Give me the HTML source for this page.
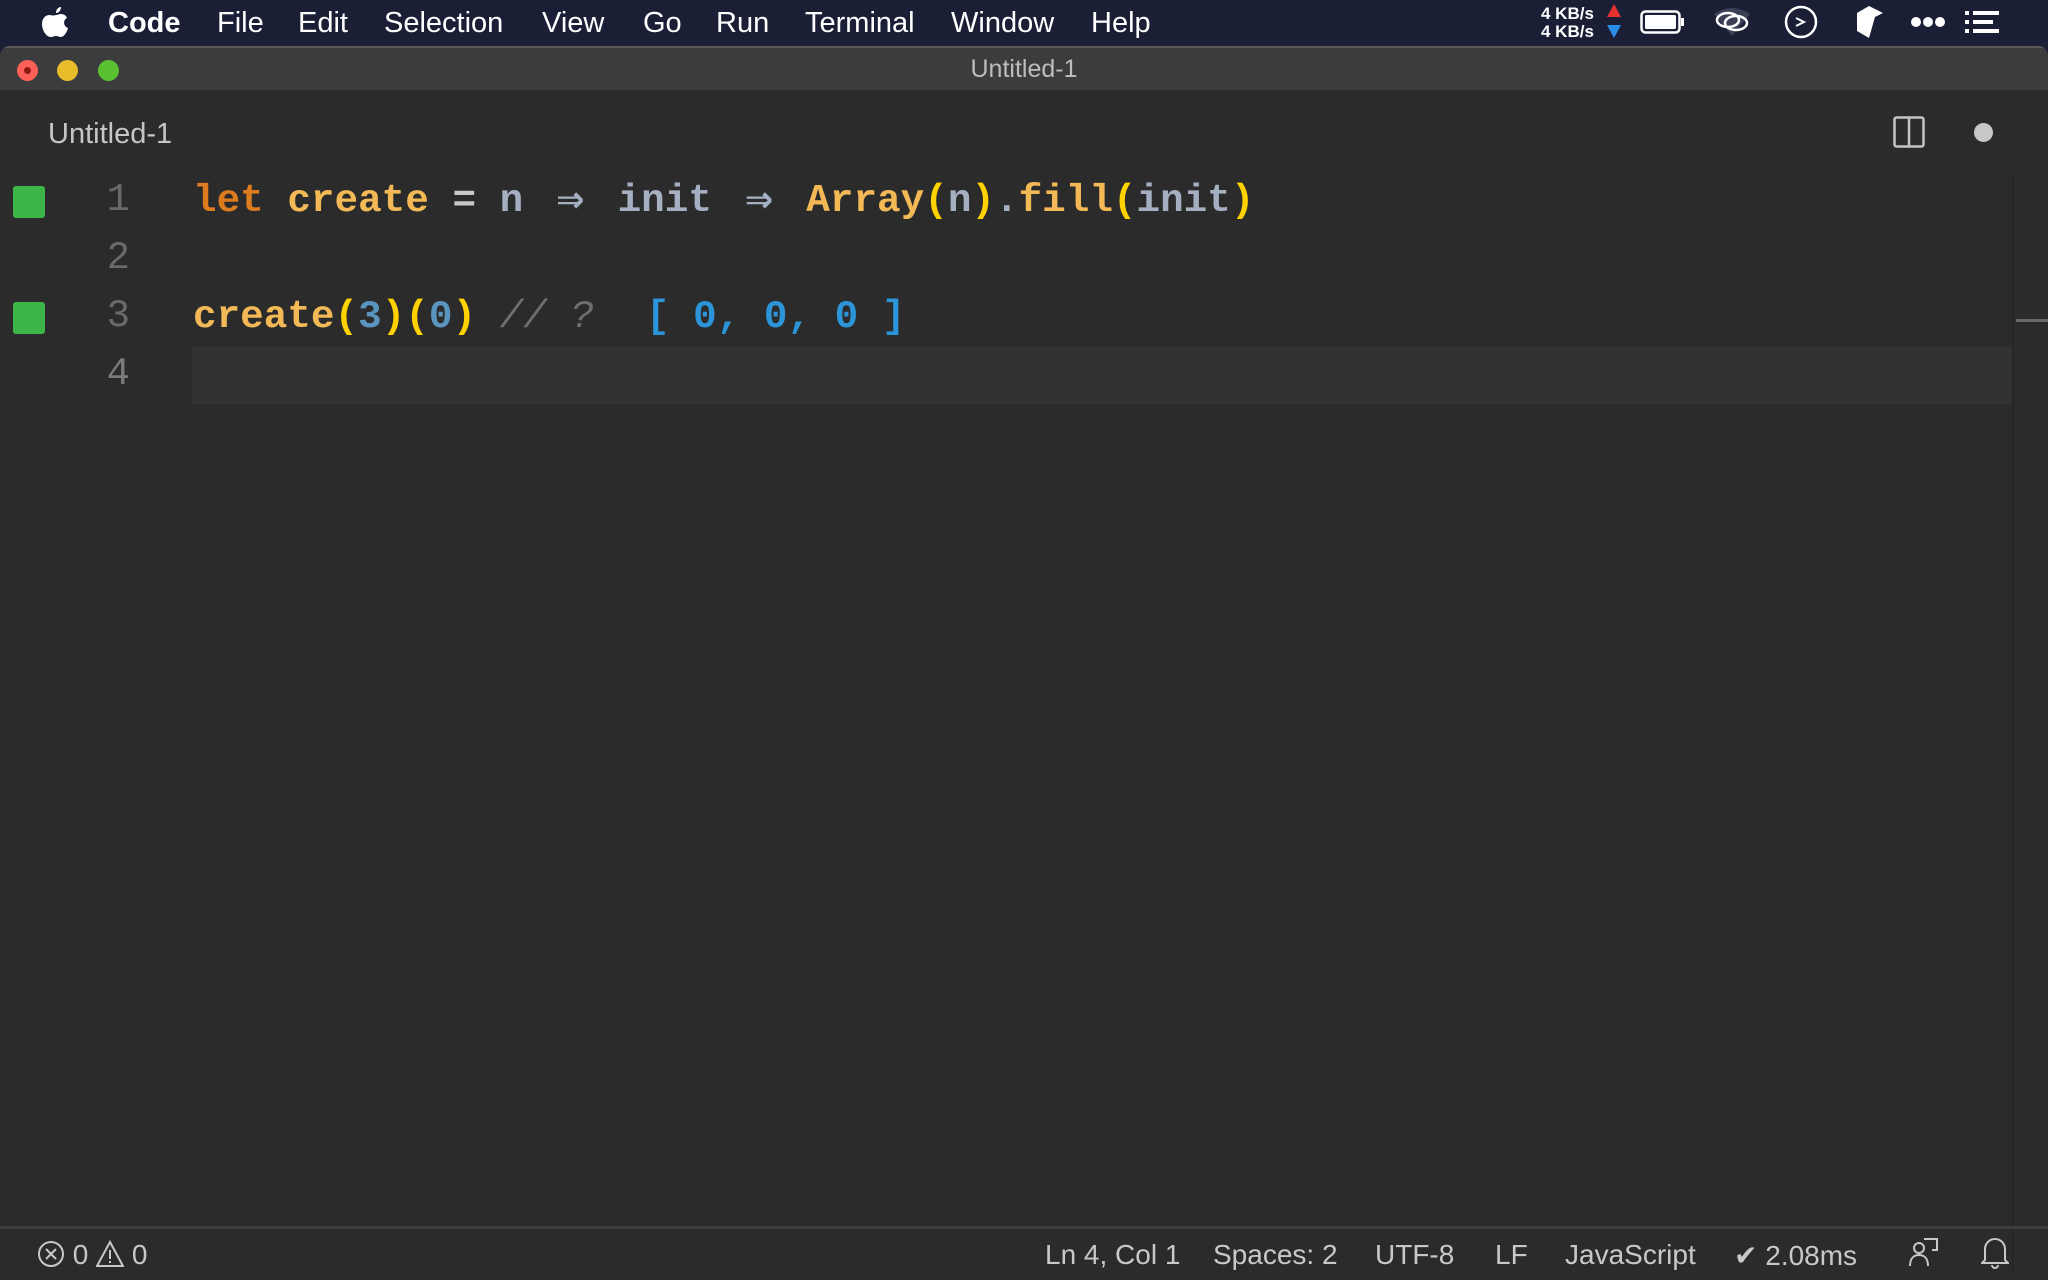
<!DOCTYPE html>
<html><head><meta charset="utf-8"><style>
*{margin:0;padding:0;box-sizing:border-box}
body{width:2048px;height:1280px;background:#1b2036;overflow:hidden;font-family:"Liberation Sans",sans-serif;position:relative}
.menubar{position:absolute;left:0;top:0;width:2048px;height:45px;background:#1a1f36;color:#fff;font-size:29px}
.menubar span{position:absolute;top:7px}
.win{position:absolute;left:0;top:46px;width:2048px;height:1234px;background:#2b2b2b;border-radius:10px 10px 0 0;overflow:hidden}
.title{position:absolute;left:0;top:0;width:2048px;height:44px;background:#3c3c3c;border-top:2px solid #5a5a5a}
.tl{position:absolute;top:12px;width:21px;height:21px;border-radius:50%}
.code{position:absolute;font-family:"Liberation Mono","DejaVu Sans Mono",monospace;font-size:39.3px;white-space:pre;line-height:57px}
.ln{position:absolute;left:100px;width:30px;text-align:right;font-family:"Liberation Mono",monospace;font-size:39px;color:#6a6a6a;line-height:57px}
.arr{display:inline-block;width:47.2px;text-align:center;font-family:"DejaVu Sans Mono",monospace;font-size:46px;line-height:40px;vertical-align:-2px;overflow:visible;white-space:nowrap}
.sb{position:absolute;top:1239px;font-size:28px;color:#c8c8c8}
</style></head><body>
<div class="menubar">
<svg style="position:absolute;left:42px;top:7px" width="28" height="32" viewBox="0 0 28 32"><path d="M19 0c0 3-2 6-5 6 0-3 2-6 5-6zM14 8c2 0 3-1 5-1 2 0 5 1 6 4-4 2-4 8 1 10-1 4-4 9-7 9-2 0-3-1-5-1s-3 1-5 1C4 30 0 23 0 17 0 11 4 8 7 8c2 0 4 1 7 0z" fill="#fff"/></svg>
<span style="left:108px;font-weight:bold">Code</span>
<span style="left:217px">File</span>
<span style="left:298px">Edit</span>
<span style="left:384px">Selection</span>
<span style="left:542px">View</span>
<span style="left:643px">Go</span>
<span style="left:716px">Run</span>
<span style="left:805px">Terminal</span>
<span style="left:951px">Window</span>
<span style="left:1091px">Help</span>
<div style="position:absolute;left:1541px;top:5px;font-size:17px;line-height:18px;font-weight:bold">4 KB/s<br>4 KB/s</div>
<svg style="position:absolute;left:1606px;top:4px" width="16" height="36"><path d="M8 0L15 13H1z" fill="#e8322e"/><path d="M1 21H15L8 34z" fill="#2a8de8"/></svg>
<svg style="position:absolute;left:1640px;top:10px" width="46" height="25"><rect x="1.5" y="1.5" width="38" height="21" rx="4" fill="none" stroke="#fff" stroke-width="2.5"/><rect x="5" y="5" width="31" height="14" rx="1.5" fill="#fff"/><rect x="41" y="8" width="3" height="8" fill="#fff"/></svg>
<svg style="position:absolute;left:1712px;top:6px" width="40" height="32"><path d="M2 8Q20-4 38 8L20 30z" fill="#3a3f55"/><ellipse cx="16" cy="14" rx="11" ry="7" fill="none" stroke="#fff" stroke-width="2.5"/><ellipse cx="24" cy="17" rx="11" ry="7" fill="none" stroke="#fff" stroke-width="2.5"/></svg>
<svg style="position:absolute;left:1783px;top:4px" width="36" height="36"><circle cx="18" cy="18" r="15" fill="none" stroke="#fff" stroke-width="2.5"/><path d="M13 14l8 4-8 4" fill="none" stroke="#fff" stroke-width="2"/></svg>
<svg style="position:absolute;left:1855px;top:5px" width="30" height="34"><path d="M2 8L14 1 28 8 20 12 16 26 14 33 2 26z" fill="#fff"/></svg>
<svg style="position:absolute;left:1910px;top:16px" width="36" height="12"><circle cx="6" cy="6" r="5" fill="#fff"/><circle cx="18" cy="6" r="5" fill="#fff"/><circle cx="30" cy="6" r="5" fill="#fff"/></svg>
<svg style="position:absolute;left:1965px;top:11px" width="36" height="22"><rect x="0" y="0" width="4" height="4" fill="#fff"/><rect x="8" y="0" width="26" height="4" fill="#fff"/><rect x="0" y="9" width="4" height="4" fill="#fff"/><rect x="8" y="9" width="20" height="4" fill="#fff"/><rect x="0" y="18" width="4" height="4" fill="#fff"/><rect x="8" y="18" width="26" height="4" fill="#fff"/></svg>
</div>
<div class="win">
<div class="title">
<div class="tl" style="left:17px;background:#fe5f57"><div style="width:7px;height:7px;border-radius:50%;background:#8a1a12;margin:7px"></div></div>
<div class="tl" style="left:57px;background:#e8bd2b"></div>
<div class="tl" style="left:98px;background:#5ac231"></div>
<div style="position:absolute;left:0;width:2048px;top:7px;text-align:center;color:#bdbdbd;font-size:25px">Untitled-1</div>
</div>
<div style="position:absolute;left:48px;top:72px;color:#c6c6c6;font-size:29px">Untitled-1</div>
<svg style="position:absolute;left:1893px;top:70px" width="32" height="32"><rect x="1.5" y="1.5" width="29" height="29" rx="2" fill="none" stroke="#c5c5c5" stroke-width="2.5"/><line x1="16" y1="2" x2="16" y2="30" stroke="#c5c5c5" stroke-width="2.5"/></svg>
<div style="position:absolute;left:1974px;top:77px;width:19px;height:19px;border-radius:50%;background:#c8c8c8"></div>
<div style="position:absolute;left:192px;top:300px;width:1820px;height:58px;background:#323232"></div>
<div style="position:absolute;left:2012px;top:128px;width:2px;height:1100px;background:#262626"></div>
<div style="position:absolute;left:2016px;top:273px;width:32px;height:3px;background:#6a6a6a"></div>
<div style="position:absolute;left:13px;top:140px;width:32px;height:32px;background:#3db548;border-radius:3px"></div>
<div style="position:absolute;left:13px;top:256px;width:32px;height:32px;background:#3db548;border-radius:3px"></div>
<div class="ln" style="top:126px">1</div>
<div class="ln" style="top:184px">2</div>
<div class="ln" style="top:242px">3</div>
<div class="ln" style="top:300px;color:#7a7a7a">4</div>
<div class="code" style="left:193px;top:126px;font-weight:bold"><span style="color:#dd7b1f">let</span> <span style="color:#f2b956">create</span> <span style="color:#c8c8c8">=</span> <span style="color:#a4b0c2">n</span> <span class="arr" style="color:#a4b0c2">⇒</span> <span style="color:#a4b0c2">init</span> <span class="arr" style="color:#a4b0c2">⇒</span> <span style="color:#f2b956">Array</span><span style="color:#ffd200">(</span><span style="color:#a4b0c2">n</span><span style="color:#ffd200">)</span><span style="color:#a4b0c2">.</span><span style="color:#f2b956">fill</span><span style="color:#ffd200">(</span><span style="color:#a4b0c2">init</span><span style="color:#ffd200">)</span></div>
<div class="code" style="left:193px;top:242px;font-weight:bold"><span style="color:#f2b956">create</span><span style="color:#ffd200">(</span><span style="color:#5a95c0">3</span><span style="color:#ffd200">)(</span><span style="color:#5a95c0">0</span><span style="color:#ffd200">)</span> <span style="color:#6f6f6f;font-style:italic;font-weight:normal">// ?</span></div>
<div class="code" style="left:646px;top:242px;color:#2c94d8;font-weight:bold">[ 0, 0, 0 ]</div>
<div style="position:absolute;left:0;top:1180px;width:2048px;height:3px;background:#3c3c3c"></div>
</div>
<div class="sb" style="left:37px"><svg width="28" height="28" style="vertical-align:-4px"><circle cx="14" cy="14" r="12" fill="none" stroke="#c8c8c8" stroke-width="2"/><path d="M9 9l10 10M19 9L9 19" stroke="#c8c8c8" stroke-width="2"/></svg> 0 <svg width="28" height="28" style="vertical-align:-4px"><path d="M14 2L27 26H1z" fill="none" stroke="#c8c8c8" stroke-width="2"/><path d="M14 10v9M14 21v2" stroke="#c8c8c8" stroke-width="2"/></svg> 0</div>
<div class="sb" style="left:1045px">Ln 4, Col 1</div>
<div class="sb" style="left:1213px">Spaces: 2</div>
<div class="sb" style="left:1375px">UTF-8</div>
<div class="sb" style="left:1495px">LF</div>
<div class="sb" style="left:1565px">JavaScript</div>
<div class="sb" style="left:1734px">✔ 2.08ms</div>
<svg style="position:absolute;left:1908px;top:1236px" width="32" height="32"><circle cx="11" cy="12" r="5" fill="none" stroke="#c8c8c8" stroke-width="2"/><path d="M2 30c0-8 4-11 9-11s9 3 9 11M16 3h13v11h-5" fill="none" stroke="#c8c8c8" stroke-width="2"/></svg>
<svg style="position:absolute;left:1981px;top:1235px" width="28" height="34"><path d="M4 25V14a10 10 0 0 1 20 0v11l3 3H1zM11 30a3 3 0 0 0 6 0" fill="none" stroke="#c8c8c8" stroke-width="2"/></svg>
</body></html>
